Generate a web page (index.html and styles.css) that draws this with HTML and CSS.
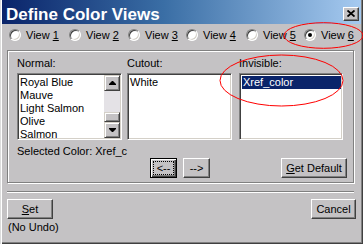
FILE: index.html
```html
<!DOCTYPE html>
<html>
<head>
<meta charset="utf-8">
<link rel="stylesheet" href="styles.css">
</head>
<body>
<div class="window">
  <div class="titlebar">
    <span class="title">Define Color Views</span>
    <span class="close"><svg width="8" height="7" viewBox="0 0 8 7"><path d="M0.5 0.5 L7.5 6.5 M7.5 0.5 L0.5 6.5" stroke="#000" stroke-width="1.8" fill="none"/></svg></span>
  </div>
  <div class="content">
    <div class="radios">
      <label class="radio"><span class="dot"></span><span>View <u>1</u></span></label>
      <label class="radio"><span class="dot"></span><span>View <u>2</u></span></label>
      <label class="radio"><span class="dot"></span><span>View <u>3</u></span></label>
      <label class="radio"><span class="dot"></span><span>View <u>4</u></span></label>
      <label class="radio"><span class="dot"></span><span>View <u>5</u></span></label>
      <label class="radio"><span class="dot checked"></span><span>View <u>6</u></span></label>
    </div>
    <div class="group">
      <div class="lists">
        <div class="col">
          <div class="lbl">Normal:</div>
          <div class="listbox">
            <div class="items">
              <div class="item">Royal Blue</div>
              <div class="item">Mauve</div>
              <div class="item">Light Salmon</div>
              <div class="item">Olive</div>
              <div class="item">Salmon</div>
            </div>
            <div class="scrollbar">
              <div class="sbtn"><svg width="7" height="4" viewBox="0 0 7 4"><polygon points="3,0 4,0 7,3 7,4 0,4 0,3" fill="#000"/></svg></div>
              <div class="track"><div class="thumb"></div></div>
              <div class="sbtn"><svg width="7" height="4" viewBox="0 0 7 4"><polygon points="0,0 7,0 7,1 4,4 3,4 0,1" fill="#000"/></svg></div>
            </div>
          </div>
        </div>
        <div class="col">
          <div class="lbl">Cutout:</div>
          <div class="listbox">
            <div class="items">
              <div class="item">White</div>
            </div>
          </div>
        </div>
        <div class="col col-last">
          <div class="lbl">Invisible:</div>
          <div class="listbox">
            <div class="items">
              <div class="item selected">Xref_color</div>
            </div>
          </div>
        </div>
      </div>
      <div class="selcolor">Selected Color: Xref_c</div>
      <div class="btnrow">
        <button class="btn default arrow"><span class="focus">&lt;--</span></button>
        <button class="btn arrow">--&gt;</button>
        <button class="btn getdef"><u>G</u>et Default</button>
      </div>
    </div>
    <div class="sep"></div>
    <div class="footer">
      <div class="footer-left">
        <button class="btn set"><u>S</u>et</button>
        <div class="noundo">(No Undo)</div>
      </div>
      <button class="btn cancel">Cancel</button>
    </div>
  </div>
  <svg class="marks" width="363" height="244" viewBox="0 0 363 244">
    <ellipse cx="323.5" cy="35.5" rx="39.5" ry="12.8" fill="none" stroke="#ff0000" stroke-width="1"/>
    <ellipse cx="281.5" cy="80.5" rx="61.5" ry="25.5" fill="none" stroke="#ff0000" stroke-width="1"/>
  </svg>
</div>
</body>
</html>
```

FILE: styles.css
```css
html, body {
  margin: 0;
  padding: 0;
}
body {
  background: #c4c2c4;
  font-family: "Liberation Sans", Arial, sans-serif;
  font-size: 11px;
  color: #000;
}
.window {
  position: relative;
  width: 363px;
  height: 244px;
  box-sizing: border-box;
  padding: 0 2px 2px 2px;
  background: #c4c2c4;
  box-shadow: inset 1px 0 0 #dcdcdc, inset 2px 0 0 #fff, inset -1px -1px 0 #404040, inset -2px -2px 0 #808080;
  overflow: hidden;
}
.titlebar {
  height: 24px;
  box-sizing: border-box;
  padding: 5px 2px 0 4px;
  display: flex;
  align-items: flex-start;
  justify-content: space-between;
  background: linear-gradient(to right, #0a246a 0%, #3a6ea5 45%, #a6caf0 100%);
}
.title {
  color: #fff;
  font-weight: bold;
  font-size: 17px;
  line-height: 19px;
  white-space: nowrap;
}
.close {
  margin-top: 2px;
  width: 16px;
  height: 14px;
  box-sizing: border-box;
  background: #c4c2c4;
  border: 1px solid;
  border-color: #fff #404040 #404040 #fff;
  box-shadow: inset -1px -1px 0 #808080;
  display: flex;
  align-items: center;
  justify-content: center;
  padding: 0 1px 1px 0;
}
.close svg { display: block; }
.content {
  padding: 0 5px 0 5px;
}
.radios {
  margin-top: 4px;
  padding-left: 2px;
  height: 14px;
  display: grid;
  grid-template-columns: 60px 59px 58px 60px 58px 50px;
}
.radio {
  display: flex;
  align-items: center;
  gap: 5px;
  line-height: 14px;
  white-space: nowrap;
}
.dot {
  width: 12px;
  height: 12px;
  box-sizing: border-box;
  border-radius: 50%;
  border: 1px solid;
  border-color: #808080 #fff #fff #808080;
  background: #fff;
  box-shadow: inset 1px 1px 0 #404040, inset -1px -1px 0 #d4d0c8;
  display: flex;
  align-items: center;
  justify-content: center;
  flex: none;
}
.dot.checked::after {
  content: "";
  width: 4px;
  height: 4px;
  border-radius: 50%;
  background: #000;
}
.group {
  margin-top: 8px;
  width: 347px;
  height: 133px;
  box-sizing: border-box;
  border: 1px solid #808080;
  box-shadow: inset 1px 1px 0 #fff, 1px 1px 0 #fff;
  padding: 6px 8px 0 9px;
}
.lists {
  display: grid;
  grid-template-columns: 105px 105px 106px;
  column-gap: 5px;
}
.col-last {
  margin-left: 2px;
}
.lbl {
  line-height: 13px;
  height: 13px;
  white-space: nowrap;
}
.listbox {
  margin-top: 3px;
  height: 67px;
  box-sizing: border-box;
  background: #fff;
  border: 1px solid;
  border-color: #808080 #fff #fff #808080;
  box-shadow: inset 1px 1px 0 #404040, inset -1px -1px 0 #d4d0c8;
  padding: 1px;
  display: flex;
  overflow: hidden;
}
.items {
  flex: 1;
  min-width: 0;
  padding-top: 1px;
}
.item {
  line-height: 13px;
  height: 13px;
  padding-left: 1px;
  white-space: nowrap;
}
.item.selected {
  background: #0a246a;
  color: #fff;
  margin-left: 1px;
  padding-left: 1px;
}
.scrollbar {
  width: 16px;
  display: flex;
  flex-direction: column;
}
.sbtn {
  height: 16px;
  box-sizing: border-box;
  background: #c4c2c4;
  border: 1px solid;
  border-color: #d4d0c8 #404040 #404040 #d4d0c8;
  box-shadow: inset 1px 1px 0 #fff, inset -1px -1px 0 #808080;
  display: flex;
  align-items: center;
  justify-content: center;
  flex: none;
}
.sbtn svg { display: block; }
.track {
  flex: 1;
  background: #e4e2e6;
  padding-top: 21px;
  box-sizing: border-box;
}
.thumb {
  height: 10px;
  box-sizing: border-box;
  background: #c4c2c4;
  border: 1px solid;
  border-color: #d4d0c8 #404040 #404040 #d4d0c8;
  box-shadow: inset 1px 1px 0 #fff, inset -1px -1px 0 #808080;
}
.selcolor {
  margin-top: 5px;
  line-height: 13px;
  height: 13px;
  white-space: nowrap;
}
.btnrow {
  display: flex;
  align-items: flex-start;
}
.btn {
  font-family: "Liberation Sans", Arial, sans-serif;
  font-size: 11px;
  color: #000;
  height: 20px;
  box-sizing: border-box;
  background: #c4c2c4;
  border: 1px solid;
  border-color: #fff #404040 #404040 #fff;
  box-shadow: inset -1px -1px 0 #808080;
  padding: 0;
  margin: 0;
  line-height: 16px;
  display: flex;
  align-items: center;
  justify-content: center;
}
.arrow {
  width: 27px;
}
.btn.default {
  margin-left: 133px;
  border: 1px solid #000;
  box-shadow: inset 1px 1px 0 #fff, inset -1px -1px 0 #404040, inset -2px -2px 0 #808080;
}
.focus {
  display: block;
  border: 1px dotted #000;
  padding: 0 3px;
  line-height: 12px;
}
.btn.arrow + .btn.arrow {
  margin-left: 6px;
}
.getdef {
  margin-left: auto;
  margin-right: -2px;
  width: 66px;
}
.sep {
  margin-top: 8px;
  width: 347px;
  height: 2px;
  box-sizing: border-box;
  border-top: 1px solid #808080;
  border-bottom: 1px solid #fff;
}
.footer {
  margin-top: 6px;
  display: flex;
  justify-content: space-between;
  align-items: flex-start;
}
.set {
  width: 46px;
}
.noundo {
  margin-top: 2px;
  line-height: 13px;
  padding-left: 1px;
}
.cancel {
  width: 45px;
}
.marks {
  position: absolute;
  left: 0;
  top: 0;
  pointer-events: none;
}
```
